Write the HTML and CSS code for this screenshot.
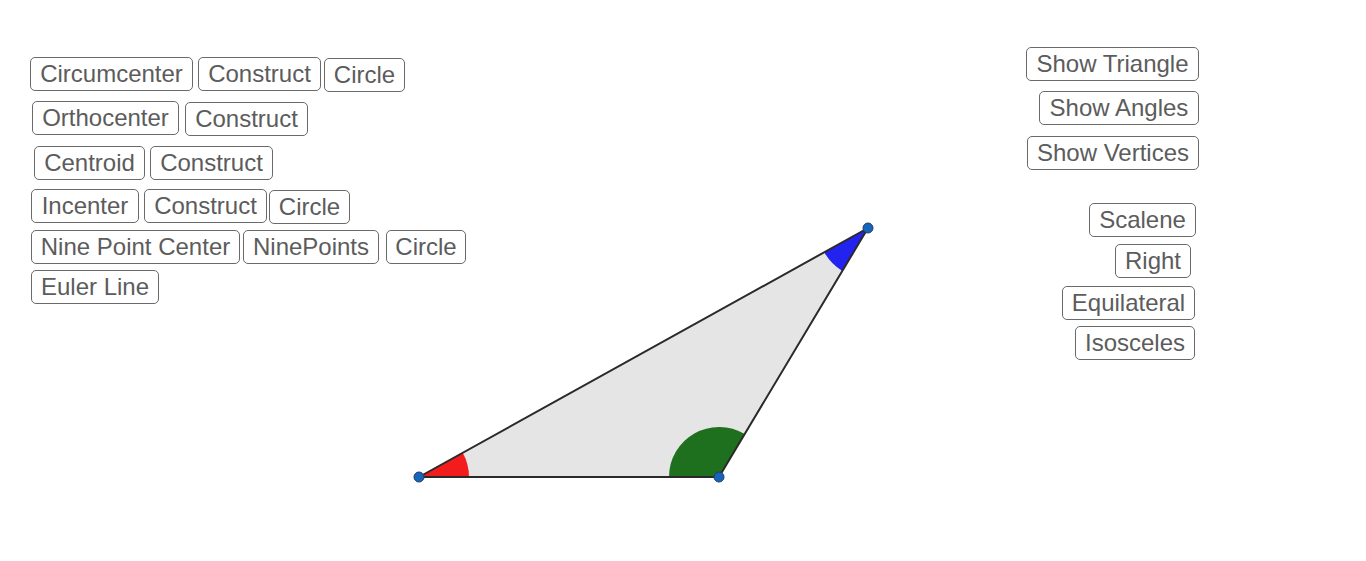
FILE: index.html
```html
<!DOCTYPE html>
<html>
<head>
<meta charset="utf-8">
<link rel="stylesheet" href="styles.css">
</head>
<body>
<div class="canvas">
  <svg class="figure" width="1366" height="561" viewBox="0 0 1366 561">
    <polygon points="419,477 719,477 868,228" fill="#e5e5e5"/>
    <path d="M419,477 L469,477 A50,50 0 0 0 462.7,452.75 Z" fill="#f21c1c"/>
    <path d="M719,477 L669,477 A50,50 0 0 1 744.7,434.1 Z" fill="#1e701f"/>
    <path d="M868,228 L824.3,252.25 A50,50 0 0 0 842.3,270.9 Z" fill="#2323f0"/>
    <polygon points="419,477 719,477 868,228" fill="none" stroke="#2a2a2a" stroke-width="2" stroke-linejoin="round"/>
    <circle cx="419" cy="477" r="5" fill="#1565c0" stroke="#2a3b55" stroke-width="1"/>
    <circle cx="719" cy="477" r="5" fill="#1565c0" stroke="#2a3b55" stroke-width="1"/>
    <circle cx="868" cy="228" r="5" fill="#1565c0" stroke="#2a3b55" stroke-width="1"/>
  </svg>

  <button class="btn b-circum">Circumcenter</button>
  <button class="btn b-circum-con">Construct</button>
  <button class="btn b-circum-circ">Circle</button>

  <button class="btn b-ortho">Orthocenter</button>
  <button class="btn b-ortho-con">Construct</button>

  <button class="btn b-cent">Centroid</button>
  <button class="btn b-cent-con">Construct</button>

  <button class="btn b-inc">Incenter</button>
  <button class="btn b-inc-con">Construct</button>
  <button class="btn b-inc-circ">Circle</button>

  <button class="btn b-nine">Nine Point Center</button>
  <button class="btn b-nine-pts">NinePoints</button>
  <button class="btn b-nine-circ">Circle</button>

  <button class="btn b-euler">Euler Line</button>

  <button class="btn b-show-tri">Show Triangle</button>
  <button class="btn b-show-ang">Show Angles</button>
  <button class="btn b-show-ver">Show Vertices</button>

  <button class="btn b-scalene">Scalene</button>
  <button class="btn b-right">Right</button>
  <button class="btn b-equi">Equilateral</button>
  <button class="btn b-isos">Isosceles</button>
</div>
</body>
</html>
```
FILE: styles.css
```css
html, body {
  margin: 0;
  padding: 0;
  background: #ffffff;
}

.canvas {
  position: relative;
  width: 1366px;
  height: 561px;
  overflow: hidden;
  background: #ffffff;
}

.figure {
  position: absolute;
  left: 0;
  top: 0;
}

.btn {
  position: absolute;
  box-sizing: border-box;
  height: 34px;
  margin: 0;
  padding: 0;
  display: flex;
  align-items: center;
  justify-content: center;
  background: #ffffff;
  border: 1px solid #6a6a6a;
  border-radius: 5px;
  color: #5c5c5c;
  font-family: "Liberation Sans", Arial, sans-serif;
  font-size: 24px;
  line-height: 32px;
  white-space: nowrap;
}

.b-circum { left: 30px; top: 57px; width: 163px; }
.b-circum-con { left: 198px; top: 57px; width: 123px; }
.b-circum-circ { left: 324px; top: 58px; width: 81px; }

.b-ortho { left: 32px; top: 101px; width: 147px; }
.b-ortho-con { left: 185px; top: 102px; width: 123px; }

.b-cent { left: 34px; top: 146px; width: 111px; }
.b-cent-con { left: 150px; top: 146px; width: 123px; }

.b-inc { left: 31px; top: 189px; width: 108px; }
.b-inc-con { left: 144px; top: 189px; width: 123px; }
.b-inc-circ { left: 269px; top: 190px; width: 81px; }

.b-nine { left: 31px; top: 230px; width: 209px; }
.b-nine-pts { left: 243px; top: 230px; width: 136px; }
.b-nine-circ { left: 386px; top: 230px; width: 80px; }

.b-euler { left: 31px; top: 270px; width: 128px; }

.b-show-tri { left: 1026px; top: 47px; width: 173px; }
.b-show-ang { left: 1039px; top: 91px; width: 160px; }
.b-show-ver { left: 1027px; top: 136px; width: 172px; }

.b-scalene { left: 1089px; top: 203px; width: 107px; }
.b-right { left: 1115px; top: 244px; width: 76px; }
.b-equi { left: 1062px; top: 286px; width: 133px; }
.b-isos { left: 1075px; top: 326px; width: 120px; }
```
